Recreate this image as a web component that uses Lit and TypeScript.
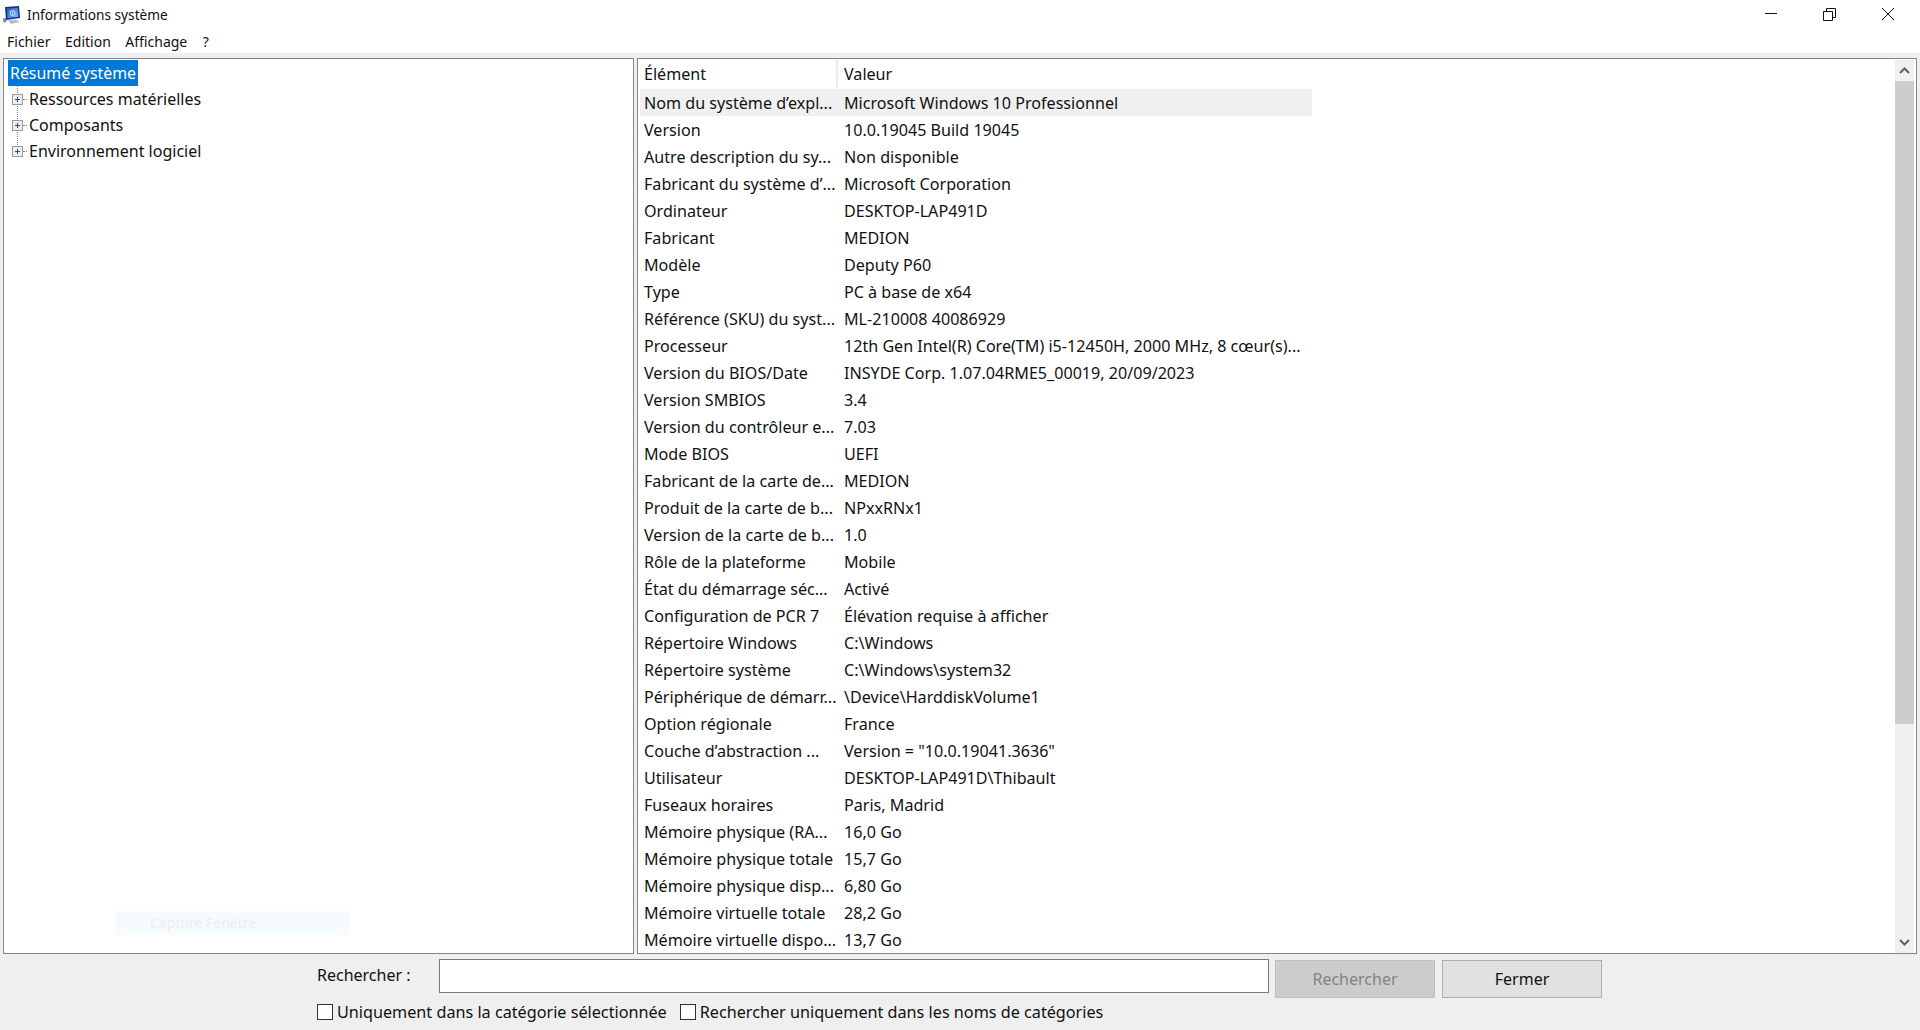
import { LitElement, html, css, svg } from "lit";
import { customElement } from "lit/decorators.js";

const ROWS: [string, string][] = [
  ["Nom du système d’expl...", "Microsoft Windows 10 Professionnel"],
  ["Version", "10.0.19045 Build 19045"],
  ["Autre description du sy...", "Non disponible"],
  ["Fabricant du système d’...", "Microsoft Corporation"],
  ["Ordinateur", "DESKTOP-LAP491D"],
  ["Fabricant", "MEDION"],
  ["Modèle", "Deputy P60"],
  ["Type", "PC à base de x64"],
  ["Référence (SKU) du syst...", "ML-210008 40086929"],
  ["Processeur", "12th Gen Intel(R) Core(TM) i5-12450H, 2000 MHz, 8 cœur(s)..."],
  ["Version du BIOS/Date", "INSYDE Corp. 1.07.04RME5_00019, 20/09/2023"],
  ["Version SMBIOS", "3.4"],
  ["Version du contrôleur e...", "7.03"],
  ["Mode BIOS", "UEFI"],
  ["Fabricant de la carte de...", "MEDION"],
  ["Produit de la carte de b...", "NPxxRNx1"],
  ["Version de la carte de b...", "1.0"],
  ["Rôle de la plateforme", "Mobile"],
  ["État du démarrage séc...", "Activé"],
  ["Configuration de PCR 7", "Élévation requise à afficher"],
  ["Répertoire Windows", "C:\\Windows"],
  ["Répertoire système", "C:\\Windows\\system32"],
  ["Périphérique de démarr...", "\\Device\\HarddiskVolume1"],
  ["Option régionale", "France"],
  ["Couche d’abstraction ...", "Version = \"10.0.19041.3636\""],
  ["Utilisateur", "DESKTOP-LAP491D\\Thibault"],
  ["Fuseaux horaires", "Paris, Madrid"],
  ["Mémoire physique (RA...", "16,0 Go"],
  ["Mémoire physique totale", "15,7 Go"],
  ["Mémoire physique disp...", "6,80 Go"],
  ["Mémoire virtuelle totale", "28,2 Go"],
  ["Mémoire virtuelle dispo...", "13,7 Go"],
];

const plus = svg`<svg class="exp" width="11" height="11" viewBox="0 0 11 11"><rect x=".5" y=".5" width="10" height="10" fill="#eeeef2" stroke="#9a9aa6"/><path d="M3 5.500h5M5.500 3v5" stroke="#3b4a78" fill="none"/></svg>`;

@customElement("app-root")
export class AppRoot extends LitElement {
  static styles = css`
    :host { display: flex; flex-direction: column; width: 1920px; height: 1030px; overflow: hidden; background: #efefef; font-family: "Noto Sans", sans-serif; font-size: 16px; color: #111; }
    .title { height: 29px; background: #fff; display: flex; align-items: center; padding-left: 2px; font-size: 13.7px; flex: none; }
    .title .label { margin-left: 5px; }
    .win { margin-left: auto; display: flex; align-self: flex-start; }
    .win svg { width: 59px; height: 27px; display: block; }
    .menu { height: 24px; background: #fff; display: flex; align-items: center; padding-left: 7px; gap: 14.500px; font-size: 14px; flex: none; }
    .menu .q { margin-left: 1px; }
    .panels { margin-top: 5px; height: 896px; display: flex; gap: 3px; padding: 0 3px; flex: none; }
    .panel { background: #fff; border: 1px solid #85858f; position: relative; overflow: hidden; box-sizing: border-box; }
    .tree { width: 631px; padding: 1px 0 0 4px; }
    .t { height: 26px; display: flex; align-items: center; white-space: nowrap; position: relative; }
    .sel { display: inline-block; background: #0078d7; color: #fff; height: 26px; line-height: 26px; padding: 0 2px; font-size: 15.900px; }
    .t .exp { margin-left: 4px; flex: none; }
    .t .txt { margin-left: 2px; }
    .t .h { width: 4px; border-top: 1px dotted #888; flex: none; }
    .vline { position: absolute; left: 13px; top: 27px; height: 67px; border-left: 1px dotted #888; }
    .capture { position: absolute; left: 112px; top: 852px; width: 233px; height: 24px; background: #f5fbfe; color: #eee; font-size: 14px; line-height: 24px; padding-left: 34px; box-sizing: border-box; }
    .list { flex: 1; display: flex; }
    .tbl { width: 672px; margin-left: 2px; flex: none; font-size: 16.120px; }
    .hd { height: 30px; display: flex; align-items: center; }
    .c1 { width: 194px; padding-left: 4px; flex: none; white-space: nowrap; box-sizing: content-box; }
    .c2 { padding-left: 6px; white-space: nowrap; }
    .hd .c1 { height: 30px; line-height: 30px; border-right: 2px solid #eee; width: 192px; }
    .r { height: 27px; display: flex; align-items: center; }
    .r.first { background: #f0f0f0; }
    .sb { margin-left: auto; margin-right: 2px; width: 19px; background: #f0f0f0; display: flex; flex-direction: column; margin-top: 1px; flex: none; }
    .arrow { height: 21px; display: flex; align-items: center; justify-content: center; flex: none; }
    .thumb { height: 643px; background: #cdcdcd; flex: none; }
    .track { flex: 1; }
    .bottom { flex: 1; display: flex; flex-direction: column; padding-left: 317px; }
    .line1 { display: flex; align-items: flex-start; height: 46px; flex: none; }
    .line1 label { width: 122px; margin-top: 10px; flex: none; }
    .input { width: 830px; height: 34px; margin-top: 5px; background: #fff; border: 1px solid #7a7a7a; box-sizing: border-box; flex: none; }
    .btn { width: 160px; height: 38px; margin-top: 6px; box-sizing: border-box; border: 1px solid #adadad; background: #e1e1e1; display: flex; align-items: center; justify-content: center; flex: none; }
    .btn.dis { margin-left: 6px; background: #cccccc; border-color: #bfbfbf; color: #838383; }
    .btn.on { margin-left: 7px; }
    .line2 { display: flex; align-items: center; height: 24px; flex: none; font-size: 16.200px; }
    .cb { width: 16px; height: 16px; background: #fff; border: 1px solid #333; box-sizing: border-box; flex: none; }
    .line2 span { margin-left: 4px; }
    .line2 span + .cb { margin-left: 13px; }
  `;

  render() {
    return html`
      <div class="title">
        <svg width="20" height="20" viewBox="0 0 20 20">
          <defs><linearGradient id="scr" x1="0" y1="0" x2="1" y2="1"><stop offset="0" stop-color="#2a57c0"/><stop offset=".6" stop-color="#4f8ee8"/><stop offset="1" stop-color="#a9c8f2"/></linearGradient></defs>
          <path d="M3 2 L17 1 L18 13 L4 15 Z" fill="#17307f"/>
          <path d="M4.800 3.500 L15.800 2.800 L16.300 11.800 L5.500 13.300 Z" fill="url(#scr)"/>
          <circle cx="10.500" cy="8" r="2.600" fill="none" stroke="#d6e6ff"/>
          <path d="M10.500 6.500v3" stroke="#d6e6ff" fill="none"/>
          <path d="M6 15.500 L13 14.500 L18 17 L9 19 Z" fill="#b8bcc6"/>
          <path d="M1 13.500 L4 13 L4.500 17 L1.500 17.500 Z" fill="#7d8294"/>
        </svg>
        <span class="label">Informations système</span>
        <div class="win">
          <svg viewBox="0 0 59 27"><path d="M22 13.500h12" stroke="#111" fill="none"/></svg>
          <svg viewBox="0 0 59 27"><path d="M21.500 11.500h9v9h-9z M24.500 11.500v-3h9v9h-3" stroke="#111" fill="none"/></svg>
          <svg viewBox="0 0 59 27"><path d="M21 8l12 12M33 8l-12 12" stroke="#111" fill="none"/></svg>
        </div>
      </div>
      <div class="menu"><span>Fichier</span><span>Edition</span><span>Affichage</span><span class="q">?</span></div>
      <div class="panels">
        <div class="panel tree">
          <div class="vline"></div>
          <div class="t"><span class="sel">Résumé système</span></div>
          <div class="t">${plus}<span class="h"></span><span class="txt">Ressources matérielles</span></div>
          <div class="t">${plus}<span class="h"></span><span class="txt">Composants</span></div>
          <div class="t">${plus}<span class="h"></span><span class="txt">Environnement logiciel</span></div>
          <div class="capture">Capture Fenêtre</div>
        </div>
        <div class="panel list">
          <div class="tbl">
            <div class="hd"><div class="c1">Élément</div><div class="c2">Valeur</div></div>
            ${ROWS.map((r, i) => html`<div class="r ${i === 0 ? "first" : ""}"><div class="c1">${r[0]}</div><div class="c2">${r[1]}</div></div>`)}
          </div>
          <div class="sb">
            <div class="arrow"><svg width="11" height="7" viewBox="0 0 11 7"><path d="M1 6l4.500-4.500 4.500 4.500" fill="none" stroke="#606060" stroke-width="2"/></svg></div>
            <div class="thumb"></div>
            <div class="track"></div>
            <div class="arrow"><svg width="11" height="7" viewBox="0 0 11 7"><path d="M1 1l4.500 4.500 4.500-4.500" fill="none" stroke="#606060" stroke-width="2"/></svg></div>
          </div>
        </div>
      </div>
      <div class="bottom">
        <div class="line1">
          <label>Rechercher :</label>
          <div class="input"></div>
          <div class="btn dis">Rechercher</div>
          <div class="btn on">Fermer</div>
        </div>
        <div class="line2">
          <div class="cb"></div><span>Uniquement dans la catégorie sélectionnée</span>
          <div class="cb"></div><span>Rechercher uniquement dans les noms de catégories</span>
        </div>
      </div>
    `;
  }
}
